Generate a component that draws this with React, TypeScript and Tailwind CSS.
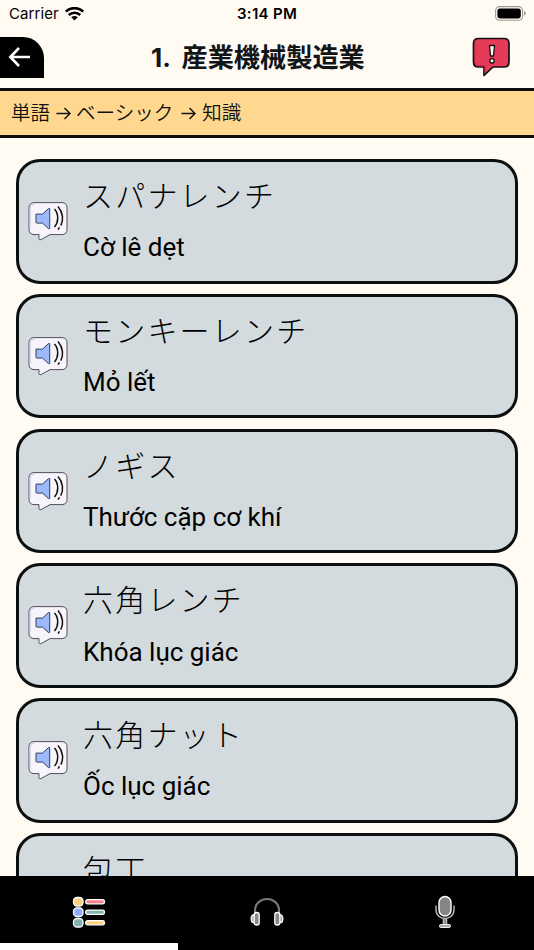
const WORDS = [
  { ja: "スパナレンチ", vi: "Cờ lê dẹt" },
  { ja: "モンキーレンチ", vi: "Mỏ lết" },
  { ja: "ノギス", vi: "Thước cặp cơ khí" },
  { ja: "六角レンチ", vi: "Khóa lục giác" },
  { ja: "六角ナット", vi: "Ốc lục giác" },
  { ja: "包丁", vi: "" },
];

function StatusBar() {
  return (
    <div className="relative flex h-[27px] items-center justify-between pl-[9px] pr-[7px] text-black">
      <div className="flex items-center gap-[6px]">
        <span className="text-[15px] leading-none tracking-[0.1px]">Carrier</span>
        <svg width="19" height="14" viewBox="0 0 19 14" fill="none" stroke="#000" strokeWidth="2.7">
          <path d="M.8 4.600C5.600 0 13.400 0 18.200 4.600" />
          <path d="M3.800 8c3.200-3 8.200-3 11.400 0" />
          <path d="M6.200 10.300c1.900-1.600 4.700-1.600 6.600 0L9.500 13.600z" fill="#000" stroke="none" />
        </svg>
      </div>
      <span className="absolute left-0 right-0 text-center text-[15px] font-semibold leading-none tracking-[0.3px]">
        3:14 PM
      </span>
      <svg width="32" height="15" viewBox="0 0 32 15">
        <rect x="0.600" y="0.600" width="27" height="13.600" rx="4" fill="none" stroke="#9c9994" strokeWidth="1.100" />
        <rect x="2.400" y="2.400" width="23.400" height="10" rx="2.400" fill="#000" />
        <path d="M29.200 5v4.800c2.200-.9 2.200-3.900 0-4.800z" fill="#9c9994" />
      </svg>
    </div>
  );
}

function Header() {
  return (
    <header className="relative flex h-[61px] items-start justify-between">
      <button
        aria-label="Back"
        className="mt-[9.500px] flex h-[41.500px] w-[44px] items-center rounded-tr-[21px] bg-black pl-[8px]"
      >
        <svg width="23" height="20" viewBox="0 0 23 20" fill="none" stroke="#fff" strokeWidth="2.600">
          <path d="M22 10H2.500M11 1L2.300 10l8.700 9" />
        </svg>
      </button>
      <h1 className="absolute left-[151px] top-[12px] flex text-[#111517]">
        <span className="w-[30.500px] text-[26px] font-bold leading-[38px]">1.</span>
        <span className="text-[26.200px] font-bold leading-[38px]">産業機械製造業</span>
      </h1>
      <svg className="mr-[23px] mt-[10px]" width="40" height="40" viewBox="0 0 40 40">
        <path
          d="M7.500 1.500h25.500c3 0 5 2 5 5v18.500c0 3-2 5-5 5H22l-9 8.500V30H7.500c-3 0-5-2-5-5V6.500c0-3 2-5 5-5z"
          fill="#e63b58"
          stroke="#111"
          strokeWidth="1.700"
          strokeLinejoin="round"
        />
        <path d="M4 8v16c0 3 1.500 4.800 4.500 4.800h5.500V36" fill="none" stroke="#c92c49" strokeWidth="1" />
        <path d="M18.500 8.500h5l-1 10.500h-3z" fill="#fff" stroke="#111" strokeWidth="1.300" strokeLinejoin="round" />
        <circle cx="21" cy="23.800" r="2.200" fill="#fff" stroke="#111" strokeWidth="1.300" />
      </svg>
    </header>
  );
}

function Arrow() {
  return (
    <svg width="15" height="14" viewBox="0 0 15 14" fill="none" stroke="#111" strokeWidth="1.400">
      <path d="M.5 6.500h13.300M8.500 1l5.500 5.500L8.500 12" />
    </svg>
  );
}

function Breadcrumb() {
  return (
    <nav className="flex h-[50px] items-center border-y-[3px] border-[#0c0c0c] bg-[#ffd78e] pl-[11px] pt-px text-[19.500px] font-[350] leading-none text-[#111]">
      <span>単語</span>
      <span className="ml-[6px] mr-[5px]">
        <Arrow />
      </span>
      <span>ベーシック</span>
      <span className="ml-[8px] mr-[6px]">
        <Arrow />
      </span>
      <span>知識</span>
    </nav>
  );
}

function SpeakerIcon() {
  return (
    <svg width="40" height="40" viewBox="0 -0.6 40 40" fill="none" strokeLinejoin="round">
      <path
        d="M6 1h28c3 0 5 2 5 5v22c0 3-2 5-5 5H22l-9 5c-1.500.7-2.300-.5-2-2v-3H6c-3 0-5-2-5-5V6c0-3 2-5 5-5z"
        fill="#f7f4fb"
        stroke="#50505a"
        strokeWidth="1"
      />
      <path d="M2.200 27V7c0-3 1.500-4.500 4.500-4.800" stroke="#d9d0ee" strokeWidth="1.300" />
      <path d="M8 12.500h6.500l6-5.500h1.200v20h-1.200l-6-5.500H8.500L8 21z" fill="#9bb9fc" stroke="#33405c" strokeWidth="1" />
      <path d="M26.500 7.500c4.300 5 4.300 13 0 18" stroke="#111" strokeWidth="1.500" />
      <path d="M30 5c5.200 6 5.700 13.500 2.800 19M31.500 25.800l-1.500 2.200" stroke="#111" strokeWidth="1.500" />
    </svg>
  );
}

function WordCard({ ja, vi }: { ja: string; vi: string }) {
  return (
    <div className="flex h-[124.600px] shrink-0 rounded-[24px] border-[3px] border-[#0c0f10] bg-[#d4dbde] pl-[9px]">
      <button aria-label="Play" className="mt-[39px] h-[40px] w-[40px]">
        <SpeakerIcon />
      </button>
      <div className="ml-[15px] flex flex-col pt-[14px]">
        <span className="text-[30px] font-light leading-[40px] tracking-[2.200px] text-black">{ja}</span>
        {vi && <span className="mt-[14.300px] font-['Roboto'] text-[26px] leading-[34px] text-black">{vi}</span>}
      </div>
    </div>
  );
}

function ListIcon() {
  return (
    <svg width="34" height="32" viewBox="0 0 34 32" stroke="#fff" strokeWidth="1.300">
      <rect x="1.500" y="1.500" width="9.500" height="8.500" rx="3.500" fill="#ffd07f" />
      <rect x="1.500" y="12" width="9.500" height="8.500" rx="3.500" fill="#8eadfa" />
      <rect x="1.500" y="22.500" width="9.500" height="8.500" rx="3.500" fill="#7eb3b1" />
      <rect x="13.700" y="3.600" width="18.800" height="4.200" rx="2.100" fill="#ff7f88" />
      <rect x="13.700" y="14.100" width="18.800" height="4.200" rx="2.100" fill="#7eb3b1" />
      <rect x="13.700" y="24.600" width="18.800" height="4.200" rx="2.100" fill="#ffd07f" />
    </svg>
  );
}

function HeadphonesIcon() {
  return (
    <svg width="34" height="30" viewBox="0 0 34 30" fill="none">
      <path d="M5 16v-2.500C5 6.500 10.500 2 17 2s12 4.500 12 11.500V16" stroke="#777" strokeWidth="2.200" />
      <path d="M4.500 17.500c-4.500 0-4.500 8.500 0 8.500M29.500 17.500c4.500 0 4.500 8.500 0 8.500" fill="#aaa" stroke="#fff" strokeWidth="1.200" />
      <rect x="4.200" y="15.500" width="5" height="12.500" rx="2.300" fill="#888" stroke="#fff" strokeWidth="1.300" />
      <rect x="24.800" y="15.500" width="5" height="12.500" rx="2.300" fill="#888" stroke="#fff" strokeWidth="1.300" />
    </svg>
  );
}

function MicIcon() {
  return (
    <svg width="20" height="34" viewBox="0 0 20 34" fill="none">
      <rect x="4" y="1.500" width="12" height="19.500" rx="6" fill="#858585" stroke="#fff" strokeWidth="1.400" />
      <path d="M1 10.500v4c0 12 18 12 18 0v-4" stroke="#bbb" strokeWidth="1.400" />
      <path d="M8.300 24v5.500h3.400V24" fill="#888" stroke="#ddd" strokeWidth="1" />
      <rect x="4.500" y="29.500" width="11" height="3" rx="1.200" fill="#aaa" stroke="#eee" strokeWidth="1" />
    </svg>
  );
}

function TabBar() {
  return (
    <footer className="flex h-[74px] shrink-0 flex-col bg-black">
      <div className="grid h-[67px] grid-cols-3">
        <button aria-label="Vocabulary" className="flex justify-center pt-[20px]">
          <ListIcon />
        </button>
        <button aria-label="Listening" className="flex justify-center pt-[21px]">
          <HeadphonesIcon />
        </button>
        <button aria-label="Speaking" className="flex justify-center pt-[19px]">
          <MicIcon />
        </button>
      </div>
      <div className="h-[7px] w-1/3 bg-white" />
    </footer>
  );
}

export default function App() {
  return (
    <div
      lang="ja"
      className="flex h-[950px] w-[534px] flex-col overflow-hidden bg-[#fffaf2] font-['Inter','Noto_Sans_CJK_JP',sans-serif]"
    >
      <StatusBar />
      <Header />
      <Breadcrumb />
      <main className="flex min-h-0 flex-1 flex-col gap-[10.200px] overflow-hidden px-[16px] pt-[21px]">
        {WORDS.map((word) => (
          <WordCard key={word.ja} ja={word.ja} vi={word.vi} />
        ))}
      </main>
      <TabBar />
    </div>
  );
}
